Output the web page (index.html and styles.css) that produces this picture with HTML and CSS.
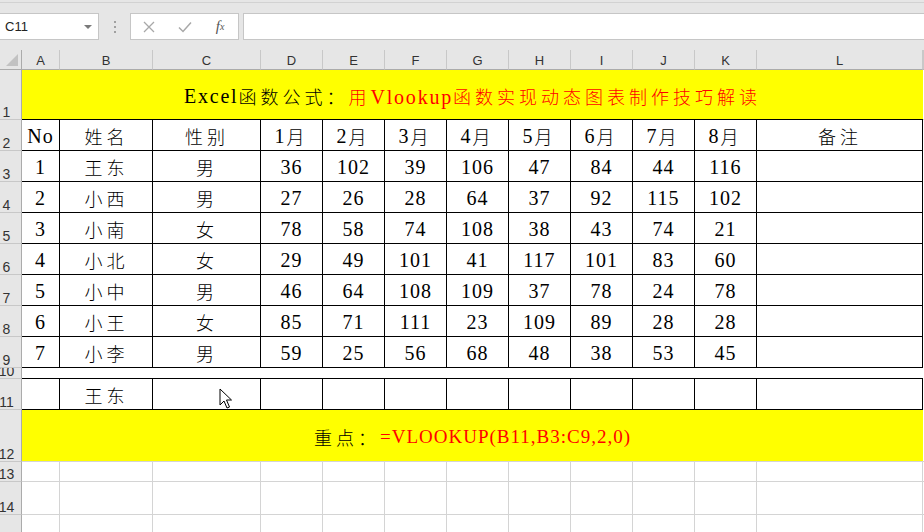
FILE: index.html
```html
<!DOCTYPE html>
<html lang="zh-CN">
<head>
<meta charset="utf-8">
<title>Excel</title>
<link rel="stylesheet" href="styles.css">
</head>
<body>
<div class="toolbar">
  <div class="topline"></div>
  <div class="bar">
    <div class="namebox"><span>C11</span><span class="caret"></span></div>
    <div class="grip"><i></i><i></i><i></i></div>
    <div class="fnbox">
      <span class="fbtn"><svg width="12" height="12" viewBox="0 0 12 12"><path d="M1 1L11 11M11 1L1 11" stroke="#a8a8a8" stroke-width="1.3" fill="none"/></svg></span>
      <span class="fbtn"><svg width="14" height="12" viewBox="0 0 14 12"><path d="M1 6.5L5 10.5L13 1.5" stroke="#a8a8a8" stroke-width="1.5" fill="none"/></svg></span>
      <span class="fbtn fx"><i>f</i><sub>x</sub></span>
    </div>
    <div class="formula"></div>
  </div>
</div>

<div class="sheet">
  <!-- column headers -->
  <div class="corner"><span class="tri"></span></div>
  <div class="ch">A</div><div class="ch">B</div><div class="ch">C</div><div class="ch">D</div>
  <div class="ch">E</div><div class="ch">F</div><div class="ch">G</div><div class="ch">H</div>
  <div class="ch">I</div><div class="ch">J</div><div class="ch">K</div><div class="ch">L</div><div class="ch"></div>

  <!-- row 1 -->
  <div class="rh"><span>1</span></div>
  <div class="title"><span class="lt">Excel</span><span class="h">函数公式：</span><span class="red"><span class="h">用</span><span class="lt">Vlookup</span><span class="h">函数实现动态图表制作技巧解读</span></span></div>
  <div class="m"></div>

  <!-- row 2 -->
  <div class="rh"><span>2</span></div>
  <div class="c">No</div><div class="c"><span class="h">姓名</span></div><div class="c"><span class="h">性别</span></div>
  <div class="c">1<span class="h">月</span></div><div class="c">2<span class="h">月</span></div><div class="c">3<span class="h">月</span></div><div class="c">4<span class="h">月</span></div>
  <div class="c">5<span class="h">月</span></div><div class="c">6<span class="h">月</span></div><div class="c">7<span class="h">月</span></div><div class="c">8<span class="h">月</span></div>
  <div class="c"><span class="h">备注</span></div><div class="m0"></div>

  <!-- row 3 -->
  <div class="rh"><span>3</span></div>
  <div class="c">1</div><div class="c"><span class="h">王东</span></div><div class="c"><span class="h">男</span></div>
  <div class="c">36</div><div class="c">102</div><div class="c">39</div><div class="c">106</div><div class="c">47</div><div class="c">84</div><div class="c">44</div><div class="c">116</div>
  <div class="c"></div><div class="m0"></div>

  <!-- row 4 -->
  <div class="rh"><span>4</span></div>
  <div class="c">2</div><div class="c"><span class="h">小西</span></div><div class="c"><span class="h">男</span></div>
  <div class="c">27</div><div class="c">26</div><div class="c">28</div><div class="c">64</div><div class="c">37</div><div class="c">92</div><div class="c">115</div><div class="c">102</div>
  <div class="c"></div><div class="m0"></div>

  <!-- row 5 -->
  <div class="rh"><span>5</span></div>
  <div class="c">3</div><div class="c"><span class="h">小南</span></div><div class="c"><span class="h">女</span></div>
  <div class="c">78</div><div class="c">58</div><div class="c">74</div><div class="c">108</div><div class="c">38</div><div class="c">43</div><div class="c">74</div><div class="c">21</div>
  <div class="c"></div><div class="m0"></div>

  <!-- row 6 -->
  <div class="rh"><span>6</span></div>
  <div class="c">4</div><div class="c"><span class="h">小北</span></div><div class="c"><span class="h">女</span></div>
  <div class="c">29</div><div class="c">49</div><div class="c">101</div><div class="c">41</div><div class="c">117</div><div class="c">101</div><div class="c">83</div><div class="c">60</div>
  <div class="c"></div><div class="m0"></div>

  <!-- row 7 -->
  <div class="rh"><span>7</span></div>
  <div class="c">5</div><div class="c"><span class="h">小中</span></div><div class="c"><span class="h">男</span></div>
  <div class="c">46</div><div class="c">64</div><div class="c">108</div><div class="c">109</div><div class="c">37</div><div class="c">78</div><div class="c">24</div><div class="c">78</div>
  <div class="c"></div><div class="m0"></div>

  <!-- row 8 -->
  <div class="rh"><span>8</span></div>
  <div class="c">6</div><div class="c"><span class="h">小王</span></div><div class="c"><span class="h">女</span></div>
  <div class="c">85</div><div class="c">71</div><div class="c">111</div><div class="c">23</div><div class="c">109</div><div class="c">89</div><div class="c">28</div><div class="c">28</div>
  <div class="c"></div><div class="m0"></div>

  <!-- row 9 -->
  <div class="rh"><span>9</span></div>
  <div class="c">7</div><div class="c"><span class="h">小李</span></div><div class="c"><span class="h">男</span></div>
  <div class="c">59</div><div class="c">25</div><div class="c">56</div><div class="c">68</div><div class="c">48</div><div class="c">38</div><div class="c">53</div><div class="c">45</div>
  <div class="c"></div><div class="m0"></div>

  <!-- row 10 -->
  <div class="rh"><span>10</span></div>
  <div class="gaprow"></div><div class="m0"></div>

  <!-- row 11 -->
  <div class="rh"><span>11</span></div>
  <div class="c"></div><div class="c"><span class="h">王东</span></div><div class="c"></div>
  <div class="c"></div><div class="c"></div><div class="c"></div><div class="c"></div><div class="c"></div><div class="c"></div><div class="c"></div><div class="c"></div>
  <div class="c"></div><div class="m0"></div>

  <!-- row 12 -->
  <div class="rh"><span>12</span></div>
  <div class="key"><span class="h">重点：</span><span class="red lk">=VLOOKUP(B11,B3:C9,2,0)</span></div>
  <div class="m"></div>

  <!-- row 13 -->
  <div class="rh"><span>13</span></div>
  <div class="g"></div><div class="g"></div><div class="g"></div><div class="g"></div><div class="g"></div><div class="g"></div><div class="g"></div><div class="g"></div><div class="g"></div><div class="g"></div><div class="g"></div><div class="g"></div><div class="m"></div>

  <!-- row 14 -->
  <div class="rh"><span>14</span></div>
  <div class="g"></div><div class="g"></div><div class="g"></div><div class="g"></div><div class="g"></div><div class="g"></div><div class="g"></div><div class="g"></div><div class="g"></div><div class="g"></div><div class="g"></div><div class="g"></div><div class="m"></div>

  <!-- row 15 -->
  <div class="rh"><span>15</span></div>
  <div class="g"></div><div class="g"></div><div class="g"></div><div class="g"></div><div class="g"></div><div class="g"></div><div class="g"></div><div class="g"></div><div class="g"></div><div class="g"></div><div class="g"></div><div class="g"></div><div class="m"></div>
</div>

<svg class="cursor" width="14" height="22" viewBox="0 0 14 22"><path d="M1 1L1 17L5 13L8 20L10.5 19L7.5 12L12.5 12Z" fill="#fff" stroke="#000" stroke-width="1" stroke-linejoin="round"/></svg>
</body>
</html>
```

FILE: styles.css
```css
html, body {
  margin: 0;
  padding: 0;
}
body {
  width: 924px;
  height: 532px;
  overflow: hidden;
  position: relative;
  background: #fff;
  font-family: "Liberation Sans", "Noto Sans CJK SC", sans-serif;
}

/* ---------- formula toolbar ---------- */
.toolbar {
  height: 50px;
  box-sizing: border-box;
  padding-top: 2px;
  background: #e6e6e6;
}
.topline {
  height: 1px;
  background: #d2d2d2;
}
.bar {
  display: flex;
  align-items: center;
  height: 27px;
  margin-top: 10px;
}
.namebox {
  width: 99px;
  height: 27px;
  box-sizing: border-box;
  background: #fff;
  border: 1px solid #c6c6c6;
  border-left: none;
  display: flex;
  align-items: center;
  justify-content: space-between;
  padding: 0 6px 0 5px;
  font-size: 13px;
  color: #222;
}
.caret {
  width: 0;
  height: 0;
  border-left: 4px solid transparent;
  border-right: 4px solid transparent;
  border-top: 4px solid #7a7a7a;
}
.grip {
  width: 31px;
  display: flex;
  flex-direction: column;
  align-items: center;
  gap: 3px;
}
.grip i {
  display: block;
  width: 2px;
  height: 2px;
  background: #a0a0a0;
}
.fnbox {
  width: 109px;
  height: 27px;
  box-sizing: border-box;
  background: #fff;
  border: 1px solid #c6c6c6;
  display: flex;
  align-items: center;
}
.fbtn {
  width: 36px;
  display: flex;
  justify-content: center;
  align-items: center;
}
.fx {
  font-family: "Liberation Serif", serif;
  font-size: 15px;
  color: #555;
  line-height: 1;
}
.fx i {
  font-style: italic;
}
.fx sub {
  font-size: 10px;
  font-style: italic;
  vertical-align: -1px;
}
.formula {
  flex: 1;
  margin-left: 4px;
  height: 27px;
  box-sizing: border-box;
  background: #fff;
  border: 1px solid #c6c6c6;
  border-right: none;
}

/* ---------- sheet grid ---------- */
.sheet {
  display: grid;
  grid-template-columns: 22px 38px 93px 108px repeat(8, 62px) 166px 1px;
  grid-template-rows: 20px 50px repeat(8, 31px) 11px 31px 52px 20px 33px 33px;
}
.sheet > div {
  box-sizing: border-box;
  min-width: 0;
}
.corner {
  background: #e6e6e6;
  border-right: 1px solid #ababab;
  border-bottom: 1px solid #ababab;
  display: flex;
  justify-content: flex-end;
  align-items: flex-end;
  padding: 0 3px 3px 0;
}
.tri {
  width: 0;
  height: 0;
  border-left: 12px solid transparent;
  border-bottom: 12px solid #c2c2c2;
}
.ch {
  background: #e6e6e6;
  border-right: 1px solid #c8c8c8;
  border-bottom: 1px solid #ababab;
  font-size: 13px;
  line-height: 21px;
  color: #333;
  text-align: center;
}
.rh {
  background: #e6e6e6;
  border-right: 1px solid #ababab;
  border-bottom: 1px solid #c8c8c8;
  display: flex;
  justify-content: center;
  align-items: flex-end;
  padding-right: 8px;
  overflow: hidden;
  font-size: 14px;
  line-height: 14px;
  color: #333;
}

.c {
  border-right: 1px solid #000;
  border-bottom: 1px solid #000;
  display: flex;
  align-items: center;
  justify-content: center;
  white-space: nowrap;
  font-family: "Liberation Serif", "Noto Sans CJK SC", serif;
  font-size: 20px;
  letter-spacing: 1px;
  color: #000;
  padding-top: 2px;
}
.g {
  border-right: 1px solid #d4d4d4;
  border-bottom: 1px solid #d4d4d4;
}
.m {
  border-bottom: 1px solid #d4d4d4;
}
.m0 {
  background: #fff;
}

.h {
  font-family: "Noto Sans CJK SC", sans-serif;
  font-size: 18px;
  font-weight: 300;
  letter-spacing: 4px;
}
.c .h {
  margin-left: 1px;
}
.red {
  color: #ff0000;
}

.title {
  grid-column: span 12;
  background: #ffff00;
  border-bottom: 1px solid #000;
  display: flex;
  align-items: center;
  justify-content: center;
  padding-top: 3px;
  white-space: nowrap;
  font-family: "Liberation Serif", "Noto Sans CJK SC", serif;
  font-size: 20px;
  color: #000;
}
.lt {
  letter-spacing: 1.8px;
}
.gaprow {
  grid-column: span 12;
  border-bottom: 1px solid #000;
}
.key {
  grid-column: span 12;
  background: #ffff00;
  border-bottom: 1px solid #d4d4d4;
  display: flex;
  align-items: center;
  justify-content: center;
  padding-top: 2px;
  white-space: nowrap;
  font-family: "Liberation Serif", "Noto Sans CJK SC", serif;
  font-size: 19px;
  color: #000;
}
.lk {
  letter-spacing: 1px;
}

.cursor {
  position: absolute;
  left: 219px;
  top: 388px;
}
```
